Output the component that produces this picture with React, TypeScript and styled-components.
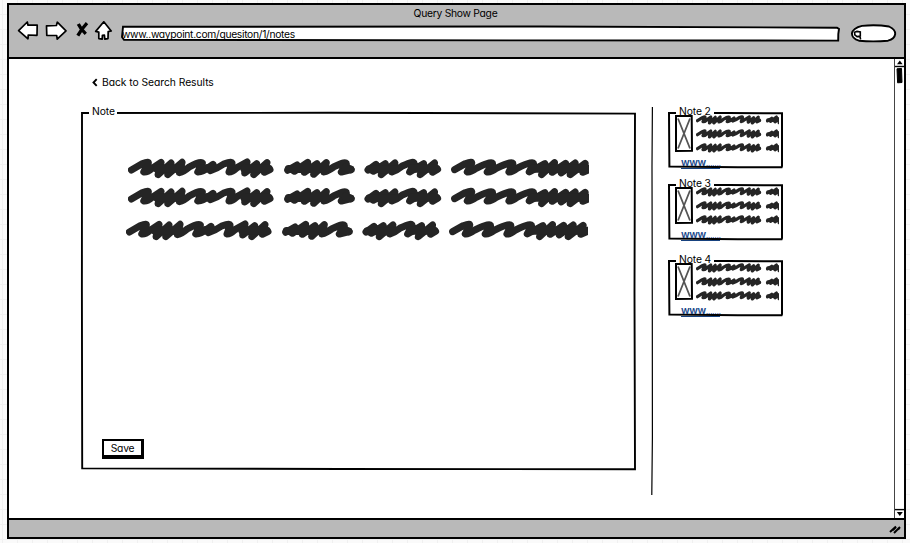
import React from "react";
import styled, { createGlobalStyle } from "styled-components";

const Global = createGlobalStyle`
  * { box-sizing: border-box; }
  html, body { margin: 0; height: 543px; overflow: hidden; }
  body {
    background-color: #fafafa;
    background-image:
      linear-gradient(to right, #f0f0f0 1px, transparent 1px),
      linear-gradient(to bottom, #f0f0f0 1px, transparent 1px);
    background-size: 15px 15px;
    background-position: 2px 14px;
    color: #000;
    font-family: Inter, "Liberation Sans", sans-serif;
    font-feature-settings: "cv11";
    font-size: 10.5px;
    line-height: 14px;
  }
`;

const Page = styled.div`
  height: 543px;
  padding: 3px 5px 4px 7px;
  display: flex;
`;

const BrowserWindow = styled.div`
  flex: 1;
  display: flex;
  flex-direction: column;
  border: 2px solid #000;
  background: #fff;
`;

const Header = styled.header`
  height: 54px;
  background: #b9b9b9;
  border-bottom: 2px solid #000;
`;

const Title = styled.div`
  height: 16px;
  padding: 1px 2px 0 0;
  text-align: center;
  font-size: 10.3px;
  letter-spacing: -0.27px;
`;

const Toolbar = styled.div`
  display: flex;
  align-items: flex-start;
  padding: 0 8px 0 9px;
`;

const NavIcons = styled.svg`
  width: 96px;
  height: 22px;
  flex: none;
  margin-left: -1px;
`;

const Field = styled.div<{ $width: number; $height: number; $gap: number; $top: number }>`
  position: relative;
  flex: none;
  width: ${(p) => p.$width}px;
  height: ${(p) => p.$height}px;
  margin: ${(p) => p.$top}px 0 0 ${(p) => p.$gap}px;
`;

const Outline = styled.svg`
  position: absolute;
  inset: 0;
  width: 100%;
  height: 100%;
  overflow: visible;
`;

const UrlText = styled.div`
  position: relative;
  height: 11px;
  margin: 2px 0 0 1px;
  overflow: hidden;
  font-size: 10.3px;
  line-height: 13px;
  letter-spacing: -0.31px;
  white-space: nowrap;
`;

const Body = styled.div`
  flex: 1;
  display: flex;
  min-height: 0;
`;

const Content = styled.main`
  flex: 1;
  display: flex;
  flex-direction: column;
  padding: 16px 0 0 72px;
`;

const BackLink = styled.a`
  display: flex;
  align-items: center;
  gap: 4px;
  height: 14px;
  margin-left: 11px;
  font-size: 10.3px;
  letter-spacing: -0.04px;
  white-space: nowrap;
  svg { width: 6px; height: 9px; }
`;

const Columns = styled.div`
  display: flex;
  align-items: flex-start;
  margin-top: 18px;
`;

const Frame = styled.section`
  position: relative;
`;

const NoteFrame = styled(Frame)`
  width: 555px;
  height: 358px;
  margin-top: 5px;
  padding: 46px 0 0 47px;
  display: flex;
  flex-direction: column;
`;

const Legend = styled.h2<{ $width: number }>`
  position: absolute;
  left: 8px;
  top: -7px;
  width: ${(p) => p.$width}px;
  height: 14px;
  margin: 0;
  padding-left: 3px;
  background: linear-gradient(#fff, #fff) 0 5px / 100% 5px no-repeat;
  font-size: 10.3px;
  font-weight: 400;
  line-height: 13px;
  letter-spacing: -0.1px;
  white-space: nowrap;
`;

const Lines = styled.div`
  display: flex;
  flex-direction: column;
  height: 250px;
`;

const MainLine = styled.svg<{ $gap: number; $shift: number }>`
  width: 461.3px;
  height: 20.67px;
  margin: ${(p) => p.$gap}px 0 0 ${(p) => p.$shift}px;
  flex: none;
`;

const SaveButton = styled.button`
  align-self: flex-start;
  width: 42px;
  height: 20px;
  margin: 31px 0 0 -26px;
  padding: 0;
  border: 2px solid #000;
  border-width: 2px 3px 4px 2px;
  background: #fff;
  color: #000;
  font: inherit;
  font-size: 10.3px;
  line-height: 13px;
  letter-spacing: -0.2px;
  text-align: center;
`;

const Divider = styled.svg`
  width: 4px;
  height: 388px;
  margin-left: 14px;
  flex: none;
`;

const Aside = styled.aside`
  padding: 5px 0 0 14px;
`;

const Card = styled(Frame)<{ $gap: number }>`
  width: 115px;
  height: 56px;
  margin-top: ${(p) => p.$gap}px;
  padding: 3px 0 0 7px;
`;

const CardRow = styled.div`
  display: flex;
  gap: 3px;
`;

const Thumb = styled.svg`
  width: 18px;
  height: 37px;
  flex: none;
`;

const CardLines = styled.div`
  display: flex;
  flex-direction: column;
  gap: 4.2px;
  svg { width: 83px; height: 9.8px; }
`;

const Link = styled.a`
  position: relative;
  display: block;
  width: 39px;
  height: 12px;
  margin: 4px 0 0 6px;
  border-bottom: 1px solid #17427f;
  color: #17468a;
  font-size: 10.3px;
  line-height: 10px;
  letter-spacing: -0.35px;
  white-space: nowrap;
  font-weight: 600;
  span { font-size: 7.5px; font-weight: 400; letter-spacing: 0; }
`;

const Scrollbar = styled.div`
  width: 10px;
  display: flex;
  flex-direction: column;
  justify-content: space-between;
  border-left: 1.5px solid #444;
`;

const ScrollTop = styled.svg`
  width: 9px;
  height: 28px;
`;

const ScrollBottom = styled.svg`
  width: 9px;
  height: 10px;
`;

const StatusBar = styled.footer`
  height: 19px;
  display: flex;
  justify-content: flex-end;
  background: #b9b9b9;
  border-top: 2px solid #000;
  svg { width: 14px; height: 16px; margin-right: 1px; }
`;

const WORDS = [
  "M33 59L65 40Q90 30 82 42L70 65Q80 67 95 54L122 36L113 73L152 38L142 73L185 36L177 67Q190 64 205 51Q240 31 246 38L232 65Q246 66 278 42L270 61Q290 55 310 41Q340 30 334 42L326 65Q336 65 350 52L380 35L373 68L409 40L400 73L440 37L432 66L449 58",
  "M502 60L530 44L522 63L562 36L552 66L590 40L580 72L618 37L611 65Q622 62 640 50Q680 30 678 42L663 65L693 58",
  "M743 59L767 42L759 63L795 40L783 73L824 38L815 65Q830 60 846 47Q885 28 881 42L868 65L910 40L900 73L943 38L937 66L952 57",
  "M1003 58L1035 40Q1060 30 1053 42L1041 65Q1050 67 1070 53Q1122 28 1116 42L1101 65Q1111 67 1130 53Q1183 28 1177 42L1166 65Q1174 67 1192 53Q1245 28 1239 42L1227 65L1274 40L1264 73L1303 37L1296 66L1336 39L1323 68L1365 38L1350 73L1395 39L1388 66L1408 57",
];

const DENSE = "M110 55H185M240 55L272 52M372 55H445M505 56H618M675 52L690 57M747 57H822M875 55H948M1236 55H1408";

const Scribble = () => (
  <g
    transform="translate(0 1)"
    fill="none"
    stroke="#252525"
    strokeWidth="21"
    strokeLinecap="round"
    strokeLinejoin="round"
  >
    {WORDS.map((d) => (
      <path key={d} d={d} />
    ))}
    <path d={DENSE} strokeWidth="24" />
  </g>
);

const NOTES = [
  { label: "Note 2", gap: 0 },
  { label: "Note 3", gap: 16 },
  { label: "Note 4", gap: 20 },
];

const LINES = [
  { gap: 0, shift: 0 },
  { gap: 8.7, shift: 0 },
  { gap: 12.2, shift: -1.8 },
];

function NoteCard({ label, gap }: { label: string; gap: number }) {
  return (
    <Card $gap={gap}>
      <Outline viewBox="0 0 115 56" preserveAspectRatio="none">
        <path d="M1 1L60 1L114 1.3L114 54L113.6 55.2L70 55.2L1.4 54.6L1.2 30Z" fill="none" stroke="#000" strokeWidth="2" />
      </Outline>
      <Legend $width={38}>{label}</Legend>
      <CardRow>
        <Thumb viewBox="0 0 18 37">
          <path d="M1 1H16.7L17 35.7L1 36Z" fill="#fff" stroke="#000" strokeWidth="2" />
          <path d="M3 3.5L15 33.5M15 3.5L3 33.5" stroke="#555" strokeWidth="1.8" />
        </Thumb>
        <CardLines>
          {[0, 1, 2].map((n) => (
            <svg key={n} viewBox="23 24 556 62" preserveAspectRatio="none">
              <Scribble />
            </svg>
          ))}
        </CardLines>
      </CardRow>
      <Link>
        www<span>.......</span>
      </Link>
    </Card>
  );
}

export default function App() {
  return (
    <>
      <Global />
      <Page>
        <BrowserWindow>
          <Header>
            <Title>Query Show Page</Title>
            <Toolbar>
              <NavIcons viewBox="17 20 96 22">
                <g transform="translate(0 -.6)">
                  <g fill="#fff" stroke="#000" strokeWidth="1.7" strokeLinejoin="round">
                    <path d="M18.6 30.3L27.3 21.6L28 24.8L37.2 24.6L37 34.9L28.2 34.6L28 38.4Z" />
                    <path d="M46.5 25.4L56.4 25.1L57.3 21.8L66 30.4L57.2 38.8L56.7 35.1L46.8 35Z" />
                    <path d="M103.8 21.4L111.2 30.6L108.2 31.2L108 38.2L104.8 38.7L104.4 34.7L102.4 34.9L102.2 38.7L98.8 38.2L98.8 31.7L95.7 31Z" />
                  </g>
                  <path d="M78.3 23.5Q81 29 85.8 33.5M87 22.8Q82 28 77.8 35.2" fill="none" stroke="#000" strokeWidth="3.3" />
                </g>
              </NavIcons>
              <Field $width={719} $height={16} $gap={8} $top={5}>
                <Outline viewBox="0 0 719 16">
                  <path d="M2 .8L420 .5L716 1.7L718 3L717.3 8L717.2 14.6L400 14.4L3 13.8L1 11L1.7 4Z" fill="#fff" stroke="#000" strokeWidth="1.9" />
                </Outline>
                <UrlText>www..waypoint.com/quesiton/1/notes</UrlText>
              </Field>
              <Field $width={45} $height={18} $gap={11} $top={4}>
                <Outline viewBox="0 0 45 18">
                  <path d="M11 .9Q25 -.5 38 1.5Q44.5 4.5 44.2 9Q43.5 14 37 15.7Q22 17 8 15.7Q1 13.5 .9 8.5Q2 3 11 .9Z" fill="#fff" stroke="#000" strokeWidth="1.9" />
                  <path d="M3.6 7.2L6 6.4L9.3 7L9.3 11L6 11.6L3.8 9.8ZM8.8 10.5L9.6 14.5" fill="none" stroke="#000" strokeWidth="1.6" />
                </Outline>
              </Field>
            </Toolbar>
          </Header>
          <Body>
            <Content>
              <BackLink>
                <svg viewBox="0 0 6 9">
                  <path d="M4.7 1.2L1.5 4.5L4.7 7.8" fill="none" stroke="#000" strokeWidth="1.9" />
                </svg>
                Back to Search Results
              </BackLink>
              <Columns>
                <NoteFrame>
                  <Outline viewBox="0 0 555 358" preserveAspectRatio="none">
                    <path d="M1 1L250 .8L554 1.6L553.5 180L554 357.3L260 357L1.2 356.4L.9 180Z" fill="none" stroke="#000" strokeWidth="1.9" />
                  </Outline>
                  <Legend $width={28}>Note</Legend>
                  <Lines>
                    {LINES.map((line, i) => (
                      <MainLine key={i} viewBox="23 24 1384 62" $gap={line.gap} $shift={line.shift}>
                        <Scribble />
                      </MainLine>
                    ))}
                  </Lines>
                  <SaveButton>Save</SaveButton>
                </NoteFrame>
                <Divider viewBox="0 0 4 388">
                  <path d="M2.4 0L2 60L2.3 200L2.4 330L1.8 388" fill="none" stroke="#000" strokeWidth="1.2" />
                </Divider>
                <Aside>
                  {NOTES.map((note) => (
                    <NoteCard key={note.label} {...note} />
                  ))}
                </Aside>
              </Columns>
            </Content>
            <Scrollbar>
              <ScrollTop viewBox="0 0 9 28">
                <path d="M0 7.5H9" stroke="#000" strokeWidth="1.4" />
                <path d="M2 5.2L4.8 1.6L7.6 5.2Z" />
                <path d="M2 9.8L6.5 9.4L7 23.5L2.6 23.8Z" stroke="#000" strokeLinejoin="round" />
              </ScrollTop>
              <ScrollBottom viewBox="0 0 9 10">
                <path d="M0 1.6H9" stroke="#000" strokeWidth="1.4" />
                <path d="M1.8 4H7.8L4.8 8Z" />
              </ScrollBottom>
            </Scrollbar>
          </Body>
          <StatusBar>
            <svg viewBox="0 0 14 16">
              <path d="M1 12L7 6.5M5 13L11 7M4 10L7 7M8 10L11 8" stroke="#000" strokeWidth="2" />
            </svg>
          </StatusBar>
        </BrowserWindow>
      </Page>
    </>
  );
}
